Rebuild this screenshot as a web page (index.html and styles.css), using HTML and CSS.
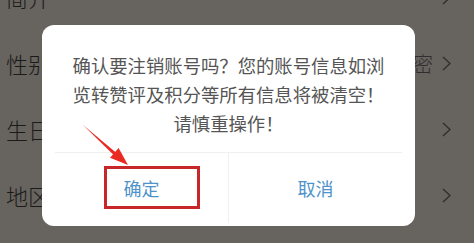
FILE: index.html
```html
<!DOCTYPE html>
<html lang="zh-CN">
<head>
  <meta charset="UTF-8">
  <title>注销账号</title>
  <link rel="stylesheet" href="styles.css">
</head>
<body>
<ul class="info-list">
  <li class="info-row">
    <span class="info-label">简介</span>
    <svg class="info-arrow" viewBox="0 0 9 15" width="9" height="15"><path d="M1 1l7 6.5L1 14" /></svg>
  </li>
  <li class="info-row">
    <span class="info-label">性别</span>
    <span class="info-value">保密</span>
    <svg class="info-arrow" viewBox="0 0 9 15" width="9" height="15"><path d="M1 1l7 6.5L1 14" /></svg>
  </li>
  <li class="info-row">
    <span class="info-label">生日</span>
    <svg class="info-arrow" viewBox="0 0 9 15" width="9" height="15"><path d="M1 1l7 6.5L1 14" /></svg>
  </li>
  <li class="info-row">
    <span class="info-label">地区</span>
    <svg class="info-arrow" viewBox="0 0 9 15" width="9" height="15"><path d="M1 1l7 6.5L1 14" /></svg>
  </li>
</ul>

<div class="dialog">
  <p class="dialog-message">确认要注销账号吗？您的账号信息如浏览转赞评及积分等所有信息将被清空！请慎重操作！</p>
  <div class="dialog-buttons">
    <button class="dialog-button confirm">确定</button>
    <button class="dialog-button cancel">取消</button>
  </div>
</div>

<div class="mark-box"></div>
<svg class="mark-arrow" viewBox="0 0 474 243" width="474" height="243">
  <polygon points="83,125 115.6,152.2 113.4,154.8" fill="#ea2a22"/>
  <polygon points="128,165 110,157.8 118.6,148" fill="#ea2a22"/>
</svg>
</body>
</html>
```

FILE: styles.css
```css
body {
  margin: 0;
  width: 474px;
  height: 243px;
  overflow: hidden;
  background: #67635e;
  font-family: "Noto Sans CJK SC", "Noto Sans", sans-serif;
  position: relative;
}
.info-list {
  list-style: none;
  margin: -36px 0 0;
  padding: 0;
}
.info-row {
  display: flex;
  align-items: center;
  height: 66px;
  padding: 0 23px 0 6px;
}
.info-label {
  font-size: 22px;
  font-weight: 300;
  color: #1a1a1a;
  flex: 1;
}
.info-value {
  font-size: 20px;
  font-weight: 300;
  color: #2e2e2e;
  margin-right: 9px;
}
.info-arrow {
  fill: none;
  stroke: #2e2e2e;
  stroke-width: 1.3;
}
.dialog {
  position: absolute;
  left: 42px;
  top: 25px;
  width: 373px;
  height: 201px;
  box-sizing: border-box;
  background: #fff;
  border-radius: 12px;
  padding-top: 26px;
}
.dialog-message {
  margin: 0 0 14px;
  padding: 0 28px;
  font-size: 18.35px;
  line-height: 29px;
  color: #555;
  text-align: center;
}
.dialog-buttons {
  display: flex;
  margin: 0 13px;
  height: 70px;
  border-top: 1px solid #f0f0f0;
}
.dialog-button {
  flex: 1;
  border: none;
  background: none;
  font-family: inherit;
  font-size: 18px;
  color: #4f93ca;
  padding: 0;
}
.dialog-button.confirm {
  border-right: 1px solid #f0f0f0;
}
.mark-box {
  position: absolute;
  left: 104px;
  top: 166px;
  width: 96px;
  height: 43px;
  box-sizing: border-box;
  border: 3px solid #c8272a;
}
.mark-arrow {
  position: absolute;
  left: 0;
  top: 0;
}
```
